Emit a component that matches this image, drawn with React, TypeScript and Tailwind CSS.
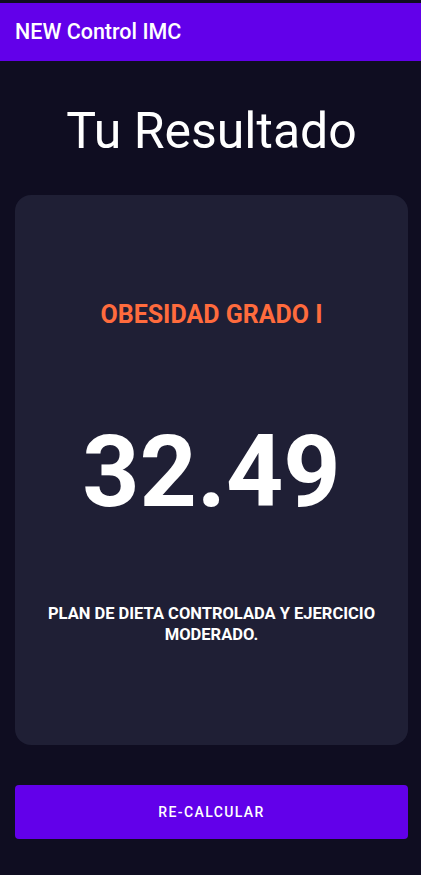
import React from 'react';

const App = () => {
  const handleRecalc = () => {
    // volver a la pantalla de calculo
  };

  return (
    <div
      className="min-h-[875px] w-full bg-[#0f0d21] pt-[3px]"
      style={{ fontFamily: 'Roboto, "Noto Sans", sans-serif' }}
    >
      {/* App bar */}
      <div className="h-[58px] bg-[#6200ea] px-[15px] flex items-center">
        <h1 className="text-white text-[21.5px] font-medium">NEW Control IMC</h1>
      </div>

      <div className="pl-[15px] pr-[13px]">
        <h2 className="mt-[42px] text-center text-white text-[50px] leading-[56px]">Tu Resultado</h2>

        {/* Result card */}
        <div className="mt-[36px] h-[550px] rounded-[16px] bg-[#1f1f35] flex flex-col items-center pt-[106px] px-4">
          <p className="text-[#ff6b3d] text-[25px] leading-[28px] font-bold">OBESIDAD GRADO I</p>
          <p className="mt-[93px] text-white text-[100px] leading-none font-bold">32.49</p>
          <p className="mt-[81px] text-white text-[16.5px] leading-[21px] font-bold text-center px-2">
            PLAN DE DIETA CONTROLADA Y EJERCICIO MODERADO.
          </p>
        </div>

        <button
          onClick={handleRecalc}
          className="mt-[40px] w-full h-[54px] rounded-[4px] bg-[#6200ea] text-white text-[14px] font-medium tracking-[0.1em]"
        >
          RE-CALCULAR
        </button>
      </div>
    </div>
  );
};

export default App;
